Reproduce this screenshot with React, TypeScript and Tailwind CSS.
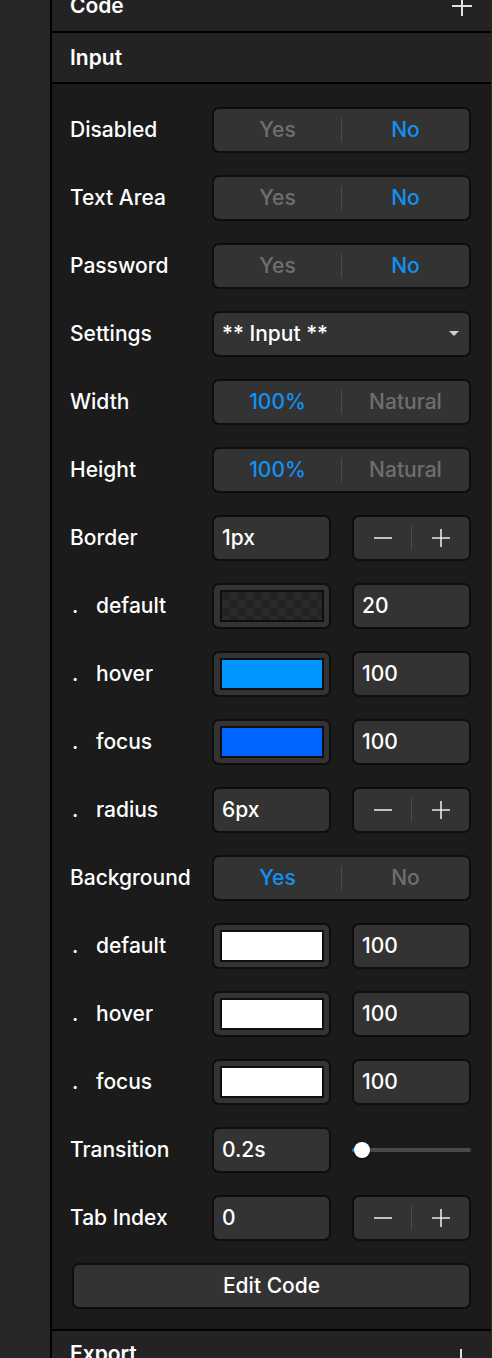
import React from "react";

const font = { fontFamily: "Inter, 'Noto Sans', sans-serif" };

const box =
  "h-[46px] rounded-[7px] border-2 border-[#0e0e0e] bg-[#333333] text-[21px]";

const Toggle = ({ left, right, active }: { left: string; right: string; active: "left" | "right" }) => (
  <div className={`${box} w-[259px] flex items-center`}>
    <span className={`flex-1 text-center ${active == "left" ? "text-[#1192f3]" : "text-[#6e6e6e]"}`}>
      {left}
    </span>
    <span className="w-px h-[24px] bg-[#4a4a4a]" />
    <span className={`flex-1 text-center ${active == "right" ? "text-[#1192f3]" : "text-[#6e6e6e]"}`}>
      {right}
    </span>
  </div>
);

const Field = ({ value }: { value: string }) => (
  <div className={`${box} w-[119px] flex items-center pl-[8px] text-white`}>{value}</div>
);

const Stepper = () => (
  <div className={`${box} w-[119px] flex items-center text-white`}>
    <span className="flex-1 flex justify-center">
      <svg width="18" height="18" viewBox="0 0 18 18">
        <path d="M0 9h18" stroke="#e6e6e6" strokeWidth="1.6" />
      </svg>
    </span>
    <span className="w-px h-[24px] bg-[#4a4a4a]" />
    <span className="flex-1 flex justify-center">
      <svg width="18" height="18" viewBox="0 0 18 18">
        <path d="M0 9h18M9 0v18" stroke="#e6e6e6" strokeWidth="1.6" />
      </svg>
    </span>
  </div>
);

const Swatch = ({ color, checker }: { color?: string; checker?: boolean }) => (
  <div className={`${box} w-[119px] flex items-center justify-center`}>
    {checker ? (
      <div className="w-[104px] h-[32px] border-2 border-[#0e0e0e] bg-[repeating-conic-gradient(#2a2a2a_0_25%,#232323_0_50%)] bg-[length:16px_16px]" />
    ) : (
      <div className="w-[104px] h-[32px] border-2 border-[#0e0e0e]" style={{ background: color }} />
    )}
  </div>
);

const Row = ({ label, sub, children }: { label: string; sub?: boolean; children: React.ReactNode }) => (
  <div className="flex items-center h-[46px]">
    <div className="w-[142px] text-[21px] font-medium text-white flex">
      {sub ? (
        <>
          <span className="w-[26px] pl-[2px]">.</span>
          <span>{label}</span>
        </>
      ) : (
        label
      )}
    </div>
    <div className="flex gap-[21px]">{children}</div>
  </div>
);

const Plus = () => (
  <svg width="20" height="20" viewBox="0 0 20 20">
    <path d="M0 10h20M10 0v20" stroke="#e0e0e0" strokeWidth="2" />
  </svg>
);

export default function App() {
  return (
    <div className="w-[492px] h-[1358px] overflow-hidden flex bg-[#1b1b1b]" style={font}>
      {/* left strip */}
      <div className="w-[52px] shrink-0 bg-[#262626] border-r-2 border-black" />

      <div className="flex-1 flex flex-col border-r border-[#2a2a2a]">
        {/* Code header, cut at the top */}
        <div className="h-[33px] overflow-hidden border-b-2 border-black bg-[#232323] shrink-0">
          <div className="-mt-[19px] h-[50px] flex items-center justify-between pl-[18px] pr-[19px]">
            <span className="text-[21px] font-semibold text-white">Code</span>
            <Plus />
          </div>
        </div>

        {/* Input header */}
        <div className="h-[51px] shrink-0 border-b-2 border-black bg-[#232323] flex items-center pl-[18px] pt-[1px]">
          <span className="text-[21px] font-semibold text-white">Input</span>
        </div>

        {/* settings */}
        <div className="flex flex-col gap-[22px] pl-[18px] pt-[23px] pb-[20px] border-b-2 border-black text-[21px] font-medium">
          <Row label="Disabled">
            <Toggle left="Yes" right="No" active="right" />
          </Row>
          <Row label="Text Area">
            <Toggle left="Yes" right="No" active="right" />
          </Row>
          <Row label="Password">
            <Toggle left="Yes" right="No" active="right" />
          </Row>
          <Row label="Settings">
            <div className={`${box} w-[259px] flex items-center justify-between pl-[8px] pr-[10px] text-white`}>
              <span>** Input **</span>
              <svg width="10" height="6" viewBox="0 0 10 6">
                <path d="M0 0h10L5 5z" fill="#d0d0d0" />
              </svg>
            </div>
          </Row>
          <Row label="Width">
            <Toggle left="100%" right="Natural" active="left" />
          </Row>
          <Row label="Height">
            <Toggle left="100%" right="Natural" active="left" />
          </Row>
          <Row label="Border">
            <Field value="1px" />
            <Stepper />
          </Row>
          <Row label="default" sub>
            <Swatch checker />
            <Field value="20" />
          </Row>
          <Row label="hover" sub>
            <Swatch color="#0096ff" />
            <Field value="100" />
          </Row>
          <Row label="focus" sub>
            <Swatch color="#0064ff" />
            <Field value="100" />
          </Row>
          <Row label="radius" sub>
            <Field value="6px" />
            <Stepper />
          </Row>
          <Row label="Background">
            <Toggle left="Yes" right="No" active="left" />
          </Row>
          <Row label="default" sub>
            <Swatch color="#ffffff" />
            <Field value="100" />
          </Row>
          <Row label="hover" sub>
            <Swatch color="#ffffff" />
            <Field value="100" />
          </Row>
          <Row label="focus" sub>
            <Swatch color="#ffffff" />
            <Field value="100" />
          </Row>
          <Row label="Transition">
            <Field value="0.2s" />
            <div className="w-[119px] h-[46px] flex items-center relative">
              <div className="w-full h-[4px] rounded-full bg-[#4a4a4a]">
                <div className="w-[8px] h-full rounded-l-full bg-[#1192f3]" />
              </div>
              <div className="absolute left-[2px] top-[15px] w-[16px] h-[16px] rounded-full bg-white shadow-[0_1px_3px_rgba(0,0,0,0.6)]" />
            </div>
          </Row>
          <Row label="Tab Index">
            <Field value="0" />
            <Stepper />
          </Row>
          <div className="pl-[2px] pr-[20px]">
            <button className={`${box} w-full text-white font-medium`}>Edit Code</button>
          </div>
        </div>

        {/* Export header */}
        <div className="h-[50px] shrink-0 bg-[#232323] flex items-start justify-between pl-[18px] pr-[20px] pt-[10px]">
          <span className="text-[21px] font-semibold text-white leading-[25px]">Export</span>
          <div className="pt-[8px]">
            <Plus />
          </div>
        </div>
      </div>
    </div>
  );
}
